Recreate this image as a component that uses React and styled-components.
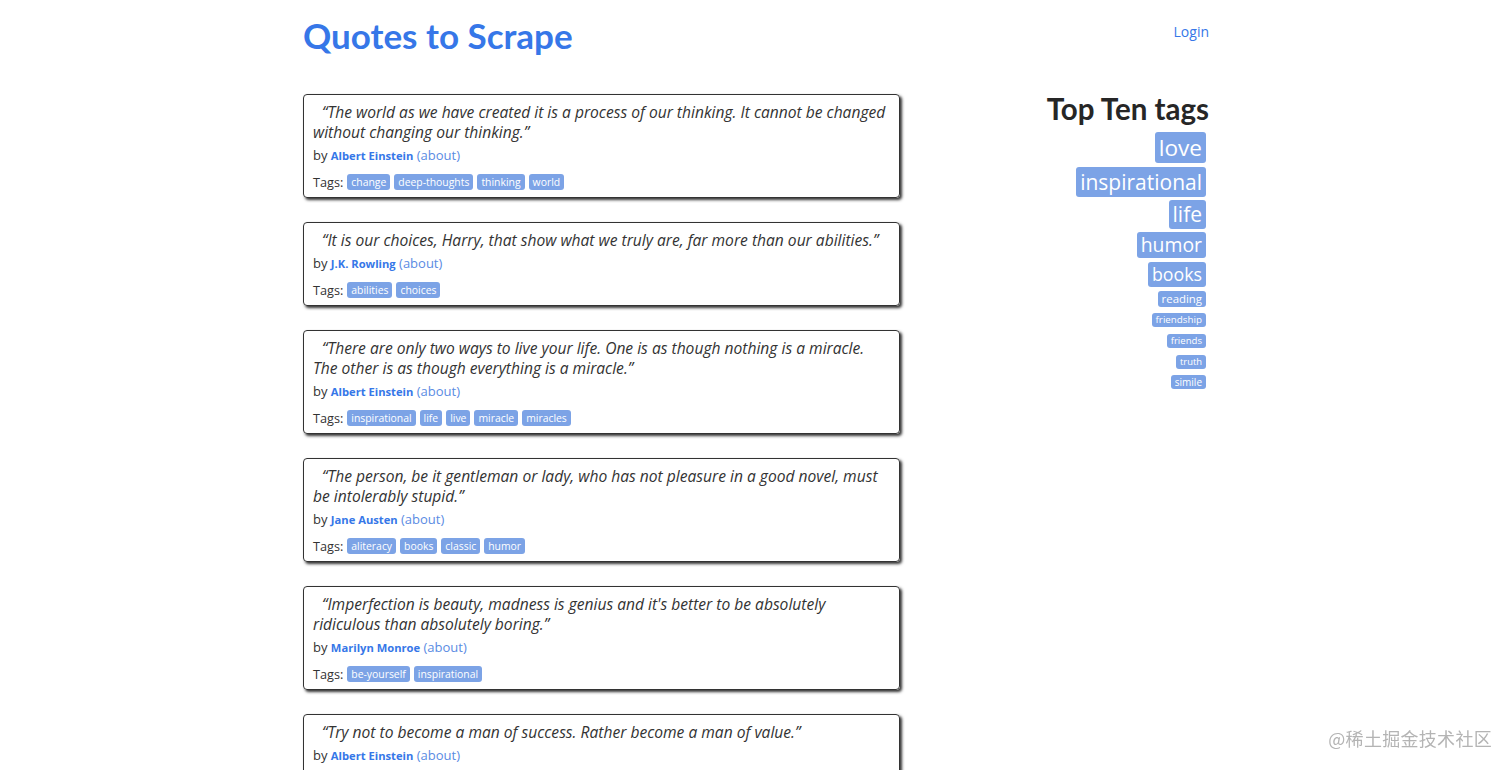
import React from "react";
import styled, { createGlobalStyle } from "styled-components";

const Global = createGlobalStyle`
  html, body { margin: 0; padding: 0; background: #fff; }
  body { font-family: "Open Sans", "Noto Sans", sans-serif; color: #333; }
  a { text-decoration: none; }
`;

const Container = styled.div`
  width: 906px;
  margin: 0 auto;
`;

const Header = styled.header`
  display: flex;
  justify-content: space-between;
  align-items: flex-start;
  height: 94px;
`;

const Title = styled.a`
  font-family: "Lato", sans-serif;
  font-weight: 700;
  font-size: 35px;
  line-height: 40px;
  margin-top: 15px;
  color: #3677e8;
`;

const Login = styled.a`
  font-size: 14px;
  line-height: 20px;
  margin-top: 22px;
  color: #3677e8;
`;

const Main = styled.div`
  display: flex;
  justify-content: space-between;
  align-items: flex-start;
`;

const QuoteList = styled.div`
  width: 597px;
  display: flex;
  flex-direction: column;
  gap: 24px;
`;

const QuoteBox = styled.div`
  border: 1px solid #333;
  border-radius: 4px;
  box-shadow: 2px 2px 3px #333;
  padding: 7px 9px 5px 9px;
`;

const QuoteText = styled.div`
  font-style: italic;
  font-size: 15.6px;
  line-height: 20px;
  text-indent: 9px;
  color: #333;
`;

const Byline = styled.div`
  margin-top: 3px;
  font-size: 13px;
  line-height: 20px;
  color: #333;
`;

const Author = styled.span`
  font-weight: 700;
  font-size: 11.2px;
  color: #3677e8;
`;

const About = styled.a`
  color: #5a8be3;
`;

const TagRow = styled.div`
  margin-top: 6px;
  display: flex;
  align-items: center;
  gap: 4px;
  font-size: 12.7px;
  line-height: 20px;
`;

const TagsLabel = styled.span`
  margin-right: 0;
`;

const Tag = styled.a`
  display: inline-block;
  background: #7ca3e6;
  color: #fff;
  font-size: 10.4px;
  line-height: 16px;
  height: 16px;
  padding: 0 4px;
  border-radius: 3px;
`;

const Side = styled.aside`
  display: flex;
  flex-direction: column;
  align-items: flex-end;
  margin-right: 3px;
`;

const SideTitle = styled.h2`
  margin: 0 -3px 0 0;
  font-family: "Lato", sans-serif;
  font-weight: 700;
  font-size: 29.5px;
  line-height: 30px;
  color: #262626;
`;

const CloudTag = styled.a`
  display: block;
  margin-top: ${(p) => p.$gap}px;
  background: #7ca3e6;
  color: #fff;
  font-size: ${(p) => p.$size}px;
  height: ${(p) => p.$h}px;
  line-height: ${(p) => p.$h}px;
  padding: 0 ${(p) => p.$pad}px;
  border-radius: 3px;
`;

const Watermark = styled.div`
  position: fixed;
  right: 20px;
  bottom: 21px;
  font-family: "Noto Sans CJK SC", sans-serif;
  font-size: 18px;
  line-height: 22px;
  color: #b4b4b4;
  letter-spacing: 0.3px;
`;

const quotes = [
  {
    text: "“The world as we have created it is a process of our thinking. It cannot be changed without changing our thinking.”",
    author: "Albert Einstein",
    tags: ["change", "deep-thoughts", "thinking", "world"],
  },
  {
    text: "“It is our choices, Harry, that show what we truly are, far more than our abilities.”",
    author: "J.K. Rowling",
    tags: ["abilities", "choices"],
  },
  {
    text: "“There are only two ways to live your life. One is as though nothing is a miracle. The other is as though everything is a miracle.”",
    author: "Albert Einstein",
    tags: ["inspirational", "life", "live", "miracle", "miracles"],
  },
  {
    text: "“The person, be it gentleman or lady, who has not pleasure in a good novel, must be intolerably stupid.”",
    author: "Jane Austen",
    tags: ["aliteracy", "books", "classic", "humor"],
  },
  {
    text: "“Imperfection is beauty, madness is genius and it's better to be absolutely ridiculous than absolutely boring.”",
    author: "Marilyn Monroe",
    tags: ["be-yourself", "inspirational"],
  },
  {
    text: "“Try not to become a man of success. Rather become a man of value.”",
    author: "Albert Einstein",
    tags: ["adulthood", "success", "value"],
  },
];

const cloud = [
  { name: "love", size: 22.6, h: 31, gap: 8, pad: 4 },
  { name: "inspirational", size: 21, h: 30, gap: 4, pad: 4 },
  { name: "life", size: 21, h: 29, gap: 3, pad: 4 },
  { name: "humor", size: 19.4, h: 26, gap: 3, pad: 4 },
  { name: "books", size: 17.8, h: 25, gap: 4, pad: 4 },
  { name: "reading", size: 11.4, h: 16, gap: 4, pad: 4 },
  { name: "friendship", size: 9.8, h: 14, gap: 6, pad: 4 },
  { name: "friends", size: 9.6, h: 14, gap: 7, pad: 4 },
  { name: "truth", size: 9.4, h: 14, gap: 7, pad: 4 },
  { name: "simile", size: 10, h: 14, gap: 6, pad: 4 },
];

export default function App() {
  return (
    <>
      <Global />
      <Container>
        <Header>
          <Title href="#">Quotes to Scrape</Title>
          <Login href="#">Login</Login>
        </Header>
        <Main>
          <QuoteList>
            {quotes.map((q, i) => (
              <QuoteBox key={i}>
                <QuoteText>{q.text}</QuoteText>
                <Byline>
                  by <Author>{q.author}</Author> <About href="#">(about)</About>
                </Byline>
                <TagRow>
                  <TagsLabel>Tags:</TagsLabel>
                  {q.tags.map((t) => (
                    <Tag key={t} href="#">{t}</Tag>
                  ))}
                </TagRow>
              </QuoteBox>
            ))}
          </QuoteList>
          <Side>
            <SideTitle>Top Ten tags</SideTitle>
            {cloud.map((c) => (
              <CloudTag
                key={c.name}
                href="#"
                $size={c.size}
                $h={c.h}
                $gap={c.gap}
                $pad={c.pad}
              >
                {c.name}
              </CloudTag>
            ))}
          </Side>
        </Main>
      </Container>
      <Watermark>@稀土掘金技术社区</Watermark>
    </>
  );
}
